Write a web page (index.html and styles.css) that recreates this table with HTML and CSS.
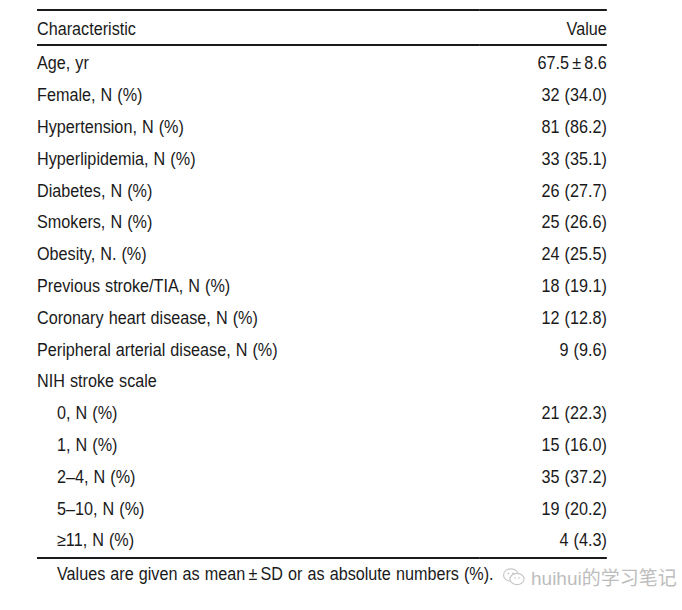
FILE: index.html
```html
<!DOCTYPE html>
<html>
<head>
<meta charset="utf-8">
<link rel="stylesheet" href="styles.css">
</head>
<body>
<div class="page">
  <div class="sheet">
    <table class="tbl">
      <thead>
        <tr><th class="c1">Characteristic</th><th class="c2">Value</th></tr>
      </thead>
      <tbody>
        <tr class="first"><td>Age, yr</td><td class="v">67.5&#8201;±&#8201;8.6</td></tr>
        <tr><td>Female, N (%)</td><td class="v">32 (34.0)</td></tr>
        <tr><td>Hypertension, N (%)</td><td class="v">81 (86.2)</td></tr>
        <tr><td>Hyperlipidemia, N (%)</td><td class="v">33 (35.1)</td></tr>
        <tr><td>Diabetes, N (%)</td><td class="v">26 (27.7)</td></tr>
        <tr><td>Smokers, N (%)</td><td class="v">25 (26.6)</td></tr>
        <tr><td>Obesity, N. (%)</td><td class="v">24 (25.5)</td></tr>
        <tr><td>Previous stroke/TIA, N (%)</td><td class="v">18 (19.1)</td></tr>
        <tr><td>Coronary heart disease, N (%)</td><td class="v">12 (12.8)</td></tr>
        <tr><td>Peripheral arterial disease, N (%)</td><td class="v">9 (9.6)</td></tr>
        <tr><td>NIH stroke scale</td><td class="v"></td></tr>
        <tr><td class="ind">0, N (%)</td><td class="v">21 (22.3)</td></tr>
        <tr><td class="ind">1, N (%)</td><td class="v">15 (16.0)</td></tr>
        <tr><td class="ind">2–4, N (%)</td><td class="v">35 (37.2)</td></tr>
        <tr><td class="ind">5–10, N (%)</td><td class="v">19 (20.2)</td></tr>
        <tr class="last"><td class="ind">≥11, N (%)</td><td class="v">4 (4.3)</td></tr>
      </tbody>
    </table>
    <div class="foot">
      <span class="note">Values are given as mean&#8201;±&#8201;SD or as absolute numbers (%).</span>
    </div>
  </div>
  <div class="wm">
    <svg class="wm-icon" width="24" height="20" viewBox="0 0 24 20">
      <ellipse cx="9" cy="8" rx="7.5" ry="6.2" fill="none" stroke="#c8c8c8" stroke-width="1.2"/>
      <ellipse cx="15" cy="12" rx="7" ry="5.6" fill="#fff" stroke="#c8c8c8" stroke-width="1.2"/>
      <circle cx="6.5" cy="6.5" r="0.9" fill="#c8c8c8"/>
      <circle cx="11" cy="6.5" r="0.9" fill="#c8c8c8"/>
      <circle cx="13" cy="11" r="0.8" fill="#c8c8c8"/>
      <circle cx="17" cy="11" r="0.8" fill="#c8c8c8"/>
    </svg>
    <span class="wm-text">huihui的学习笔记</span>
  </div>
</div>
</body>
</html>
```

FILE: styles.css
```css
html, body {
  margin: 0;
  padding: 0;
  background: #fff;
}
.page {
  position: relative;
  width: 682px;
  height: 610px;
  padding-top: 9px;
  box-sizing: border-box;
  overflow: hidden;
  font-family: "Liberation Sans", Arial, sans-serif;
  color: #1a1a1a;
  font-size: 17.5px;
  word-spacing: 0.6px;
}
.sheet {
  margin-left: 37px;
  width: 616px;
  transform: scaleX(0.925);
  transform-origin: 0 0;
}
.tbl {
  width: 100%;
  border-collapse: collapse;
  border-top: 2px solid #1a1a1a;
  border-bottom: 2px solid #1a1a1a;
}
.tbl th {
  font-weight: normal;
  height: 29px;
  padding: 4px 0 0 0;
  border-bottom: 2px solid #1a1a1a;
  vertical-align: middle;
}
.tbl .c1 { text-align: left; }
.tbl .c2 { text-align: right; }
.tbl td {
  height: 31.8px;
  padding: 0;
  vertical-align: middle;
}
.tbl tr.first td { padding-top: 2px; }
.tbl tr.last td { padding-bottom: 1px; height: 31px; }
.tbl td.v { text-align: right; }
.tbl td.ind { padding-left: 21.6px; }
.foot {
  margin-left: 21.6px;
  margin-top: 4px;
  height: 22px;
  line-height: 22px;
  white-space: nowrap;
}
.wm {
  position: absolute;
  left: 502px;
  top: 563px;
  display: flex;
  align-items: center;
  color: #bdbdbd;
  font-family: "Liberation Sans", "Noto Sans CJK SC", sans-serif;
  font-size: 19px;
  word-spacing: 0;
  white-space: nowrap;
}
.wm-icon { margin-right: 5px; }
```
